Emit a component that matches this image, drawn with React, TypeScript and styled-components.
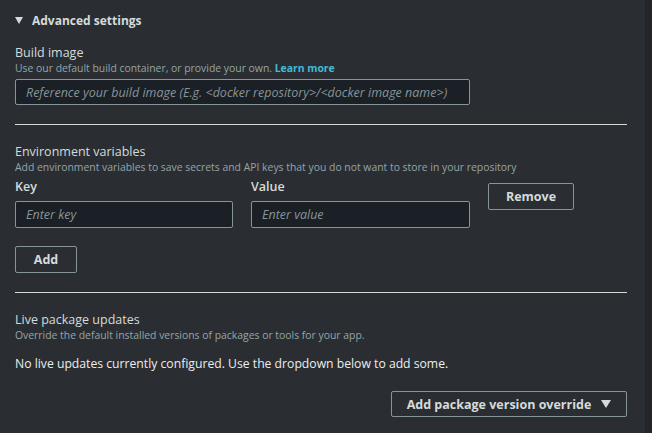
import * as React from 'react'
import styled, {createGlobalStyle} from 'styled-components'

const Global = createGlobalStyle`
  html, body {
    margin: 0;
    padding: 0;
    background: #2a2e33;
  }
  body {
    font-family: "Open Sans", "Noto Sans", sans-serif;
    color: #d5dbdb;
  }
`

const Page = styled.div`
  display: flex;
  width: 652px;
  height: 433px;
  overflow: hidden;
`

const Main = styled.div`
  flex: 1;
  padding: 10px 18px 0 15px;
`

const Scroll = styled.div`
  width: 7px;
  background: #232629;
`

const Header = styled.div`
  display: flex;
  align-items: center;
  gap: 9px;
  height: 20px;
  font-size: 12px;
  font-weight: 700;
  color: #d5dbdb;
`

const Caret = styled.span`
  width: 0;
  height: 0;
  border-left: 4.5px solid transparent;
  border-right: 4.5px solid transparent;
  border-top: 7px solid #d5dbdb;
`

const Section = styled.section<{$top: number}>`
  margin-top: ${p => p.$top}px;
`

const Title = styled.div`
  font-size: 12.5px;
  line-height: 17px;
  color: #d5dbdb;
`

const Desc = styled.div`
  font-size: 10.4px;
  line-height: 14px;
  color: #95a5a6;
`

const Link = styled.a`
  color: #44b9d6;
  font-weight: 700;
  text-decoration: none;
`

const Input = styled.input<{$w: number; $h?: number; $top?: number}>`
  box-sizing: border-box;
  display: block;
  width: ${p => p.$w}px;
  height: ${p => p.$h ?? 27}px;
  margin-top: ${p => p.$top ?? 0}px;
  padding: 0 10px;
  background: #1b1f26;
  border: 1px solid #879596;
  border-radius: 2px;
  color: #d5dbdb;
  font-family: inherit;
  font-size: 12.5px;
  outline: none;
  &::placeholder {
    color: #879596;
    font-style: italic;
  }
`

const Divider = styled.hr<{$top: number}>`
  margin: ${p => p.$top}px 0 0;
  border: none;
  border-top: 1px solid #d5dbdb;
`

const Row = styled.div`
  display: flex;
  align-items: flex-start;
  gap: 18px;
  margin-top: 4px;
`

const Field = styled.div`
  display: flex;
  flex-direction: column;
`

const Label = styled.label`
  font-size: 12.5px;
  line-height: 17px;
  font-weight: 600;
  color: #d5dbdb;
  margin-bottom: 6px;
`

const Button = styled.button<{$w: number; $h?: number}>`
  box-sizing: border-box;
  width: ${p => p.$w}px;
  height: ${p => p.$h ?? 27}px;
  background: transparent;
  border: 1px solid #879596;
  border-radius: 2px;
  color: #d5dbdb;
  font-family: inherit;
  font-size: 12.5px;
  font-weight: 700;
  display: flex;
  align-items: center;
  justify-content: center;
  gap: 10px;
  padding: 0;
`

const RemoveButton = styled(Button)`
  margin-top: 5px;
`

const AddButton = styled(Button)`
  margin-top: 18px;
`

const Message = styled.div`
  margin-top: 13px;
  font-size: 12.2px;
  line-height: 17px;
  color: #eaeded;
`

const Right = styled.div`
  display: flex;
  justify-content: flex-end;
  margin-top: 19px;
`

const SmallCaret = styled.span`
  width: 0;
  height: 0;
  border-left: 5px solid transparent;
  border-right: 5px solid transparent;
  border-top: 8px solid #d5dbdb;
`

const App = () => {
  return (
    <Page>
      <Global />
      <Main>
        <Header>
          <Caret />
          Advanced settings
        </Header>
        <Section $top={14}>
          <Title>Build image</Title>
          <Desc>
            Use our default build container, or provide your own. <Link href="#">Learn more</Link>
          </Desc>
          <Input $w={455} $h={26} $top={4} placeholder="Reference your build image (E.g. <docker repository>/<docker image name>)" />
        </Section>
        <Divider $top={19} />
        <Section $top={18}>
          <Title>Environment variables</Title>
          <Desc>Add environment variables to save secrets and API keys that you do not want to store in your repository</Desc>
          <Row>
            <Field>
              <Label>Key</Label>
              <Input $w={218} placeholder="Enter key" />
            </Field>
            <Field>
              <Label>Value</Label>
              <Input $w={219} placeholder="Enter value" />
            </Field>
            <RemoveButton $w={86}>Remove</RemoveButton>
          </Row>
          <AddButton $w={62}>Add</AddButton>
        </Section>
        <Divider $top={19} />
        <Section $top={18}>
          <Title>Live package updates</Title>
          <Desc>Override the default installed versions of packages or tools for your app.</Desc>
          <Message>No live updates currently configured. Use the dropdown below to add some.</Message>
          <Right>
            <Button $w={236} $h={26}>
              Add package version override
              <SmallCaret />
            </Button>
          </Right>
        </Section>
      </Main>
      <Scroll />
    </Page>
  )
}

export default App
